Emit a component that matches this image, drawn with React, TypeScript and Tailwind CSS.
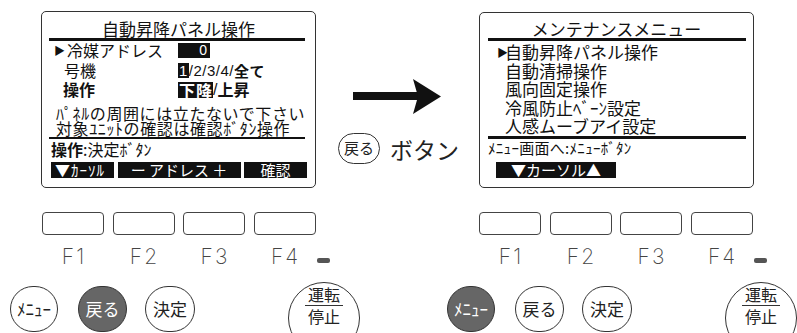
import clsx from "clsx";

// font stacks
const jp = "font-['Noto_Sans_CJK_JP','Noto_Sans_CJK_SC',sans-serif]";

function LeftScreen() {
    return (
        <div className={clsx("h-[177px] w-[275px] shrink-0 rounded-[5px] border border-[#333] pt-[7px] text-[#111]", jp)}>
            <div className="text-center text-[17px] leading-[19px]">自動昇降パネル操作</div>
            <div className="ml-[7px] mr-[10px] h-[3px] bg-[#111]" />

            {/* setting rows */}
            <div className="text-[16px] leading-[19.5px]">
                <div className="flex">
                    <span className="w-[25px] pl-[12px] text-[11px]">▶</span>
                    <span className="w-[111px]">冷媒アドレス</span>
                    <span className="flex h-[15px] w-[32px] items-center justify-end self-center bg-[#111] pr-[3px] font-['Liberation_Sans',sans-serif] text-[14px] text-white">
                        0
                    </span>
                </div>
                <div className="flex">
                    <span className="w-[136px] pl-[22px]">号機</span>
                    <span className="flex items-center font-['Liberation_Sans',sans-serif] text-[15px] tracking-[0.5px]">
                        <span className="bg-[#111] px-[1px] leading-[15px] text-white">1</span>
                        /2/3/4/
                        <span className={clsx("font-bold", jp)}>全て</span>
                    </span>
                </div>
                <div className="flex">
                    <span className="w-[136px] pl-[21px] font-bold">操作</span>
                    <span className="flex items-center font-bold">
                        <span className="bg-[#111] px-[1px] leading-[16px] text-white">下</span>
                        <span className="bg-[#111] pr-[1px] leading-[16px] text-white">降</span>
                        <span className="font-['Liberation_Sans',sans-serif] font-normal">/</span>
                        <span>上昇</span>
                    </span>
                </div>
            </div>

            <div className="mt-[6px] pl-[14px] text-[16px] leading-[15px] tracking-[0.6px]">
                <div>ﾊﾟﾈﾙの周囲には立たないで下さい</div>
                <div>対象ﾕﾆｯﾄの確認は確認ﾎﾞﾀﾝ操作</div>
            </div>
            <div className="ml-[7px] mr-[10px] mt-[1.5px] h-[2px] bg-[#111]" />

            <div className="pl-[9px] pt-[2px] text-[16px] leading-[16px]">
                <span className="font-bold">操作</span>:決定ﾎﾞﾀﾝ
            </div>

            {/* soft key captions */}
            <div className="ml-[9px] mt-[5px] flex gap-[3.5px] text-[15px] leading-[16px] text-white">
                <div className="h-[16px] w-[63px] bg-[#111] pl-[4px] tracking-[1px]">▼ｶｰｿﾙ</div>
                <div className="h-[16px] w-[123px] bg-[#111] text-center">ー アドレス ＋</div>
                <div className="h-[16px] w-[63px] bg-[#111] text-center">確認</div>
            </div>
        </div>
    );
}

function RightScreen() {
    const items = ["自動昇降パネル操作", "自動清掃操作", "風向固定操作", "冷風防止ﾍﾞｰﾝ設定", "人感ムーブアイ設定"];
    return (
        <div className={clsx("mt-[1px] h-[176px] w-[275px] shrink-0 rounded-[5px] border border-[#333] pt-[6px] text-[#111]", jp)}>
            <div className="text-center text-[17px] leading-[19px]">メンテナンスメニュー</div>
            <div className="ml-[8px] mr-[7px] h-[3px] bg-[#111]" />

            <div className="mt-[2px] text-[17px] leading-[18.5px]">
                {items.map((t, i) => (
                    <div key={t} className="flex">
                        <span className="w-[25px] pl-[17px] text-[11px]">{i === 0 ? "▶" : ""}</span>
                        <span>{t}</span>
                    </div>
                ))}
            </div>
            <div className="ml-[8px] mr-[7px] h-[3px] bg-[#111]" />

            <div className="pl-[8px] pt-[1px] text-[15px] leading-[16px] tracking-[0.3px]">ﾒﾆｭｰ画面へ:ﾒﾆｭｰﾎﾞﾀﾝ</div>
            <div className="ml-[16px] mt-[6px] h-[16px] w-[120px] bg-[#111] text-center text-[15px] leading-[16px] text-white">
                ▼カーソル▲
            </div>
        </div>
    );
}

function Middle() {
    return (
        <div className={clsx("h-[177px] w-[163px] shrink-0", jp)}>
            <svg className="ml-[37px] mt-[68px]" width="88" height="35" viewBox="0 0 88 35">
                <rect x="0" y="13" width="68" height="8" fill="#111" />
                <path d="M60 0 L88 17.5 L60 35 L65 17.5 Z" fill="#111" />
            </svg>
            <div className="mt-[19px] flex items-center">
                <div className="ml-[22px] flex h-[31px] w-[42px] items-center justify-center rounded-full border border-[#333] text-[15px] text-[#222]">
                    戻る
                </div>
                <div className="ml-[10px] text-[23px] leading-[26px] text-[#222]">ボタン</div>
            </div>
        </div>
    );
}

function Round({ label, filled, w }: { label: string; filled?: boolean; w: string }) {
    return (
        <div
            className={clsx(
                "mt-[4px] flex h-[46px] items-center justify-center rounded-full border border-[#333] text-[17px]",
                filled ? "bg-[#666] text-white" : "bg-white text-[#222]",
                w
            )}
        >
            {label}
        </div>
    );
}

function Controls({ active }: { active: "menu" | "back" }) {
    const keys = ["F1", "F2", "F3", "F4"];
    return (
        <div className={clsx("w-[350px] shrink-0", jp)}>
            <div className="ml-[32px] flex gap-[8.5px]">
                {keys.map((k) => (
                    <div key={k} className="h-[23px] w-[62px] rounded-[4px] border border-[#444]" />
                ))}
            </div>
            <div className="ml-[32px] mt-[10px] flex items-center gap-[8.5px]">
                {keys.map((k) => (
                    <div
                        key={k}
                        className="w-[62px] pl-[2px] text-center font-['Inter',sans-serif] text-[21px] font-extralight leading-[23px] tracking-[2px] text-[#444]"
                    >
                        {k}
                    </div>
                ))}
                <div className="ml-[-7px] mt-[8px] h-[5px] w-[13px] rounded-[2px] bg-[#555]" />
            </div>

            {/* round buttons */}
            <div className="mt-[14px] flex items-start">
                <Round label="ﾒﾆｭｰ" filled={active === "menu"} w="w-[48px]" />
                <div className="ml-[20px]">
                    <Round label="戻る" filled={active === "back"} w="w-[49px]" />
                </div>
                <div className="ml-[18px]">
                    <Round label="決定" w="w-[50px]" />
                </div>
                <div className="ml-[93px] flex h-[72px] w-[72px] flex-col items-center rounded-full border border-[#333] pt-[3px] text-[16px] leading-[17px] text-[#222]">
                    <span>運転</span>
                    <div className="mt-[2px] h-px w-[38px] bg-[#333]" />
                    <span className="mt-[2px]">停止</span>
                </div>
            </div>
        </div>
    );
}

export default function App() {
    return (
        <div className="h-[333px] w-[797px] overflow-hidden bg-white">
            <div className="flex items-start pl-[41px] pt-[11px]">
                <LeftScreen />
                <Middle />
                <RightScreen />
            </div>
            <div className="mt-[24px] flex pl-[10px]">
                <Controls active="back" />
                <div className="ml-[87px]">
                    <Controls active="menu" />
                </div>
            </div>
        </div>
    );
}
